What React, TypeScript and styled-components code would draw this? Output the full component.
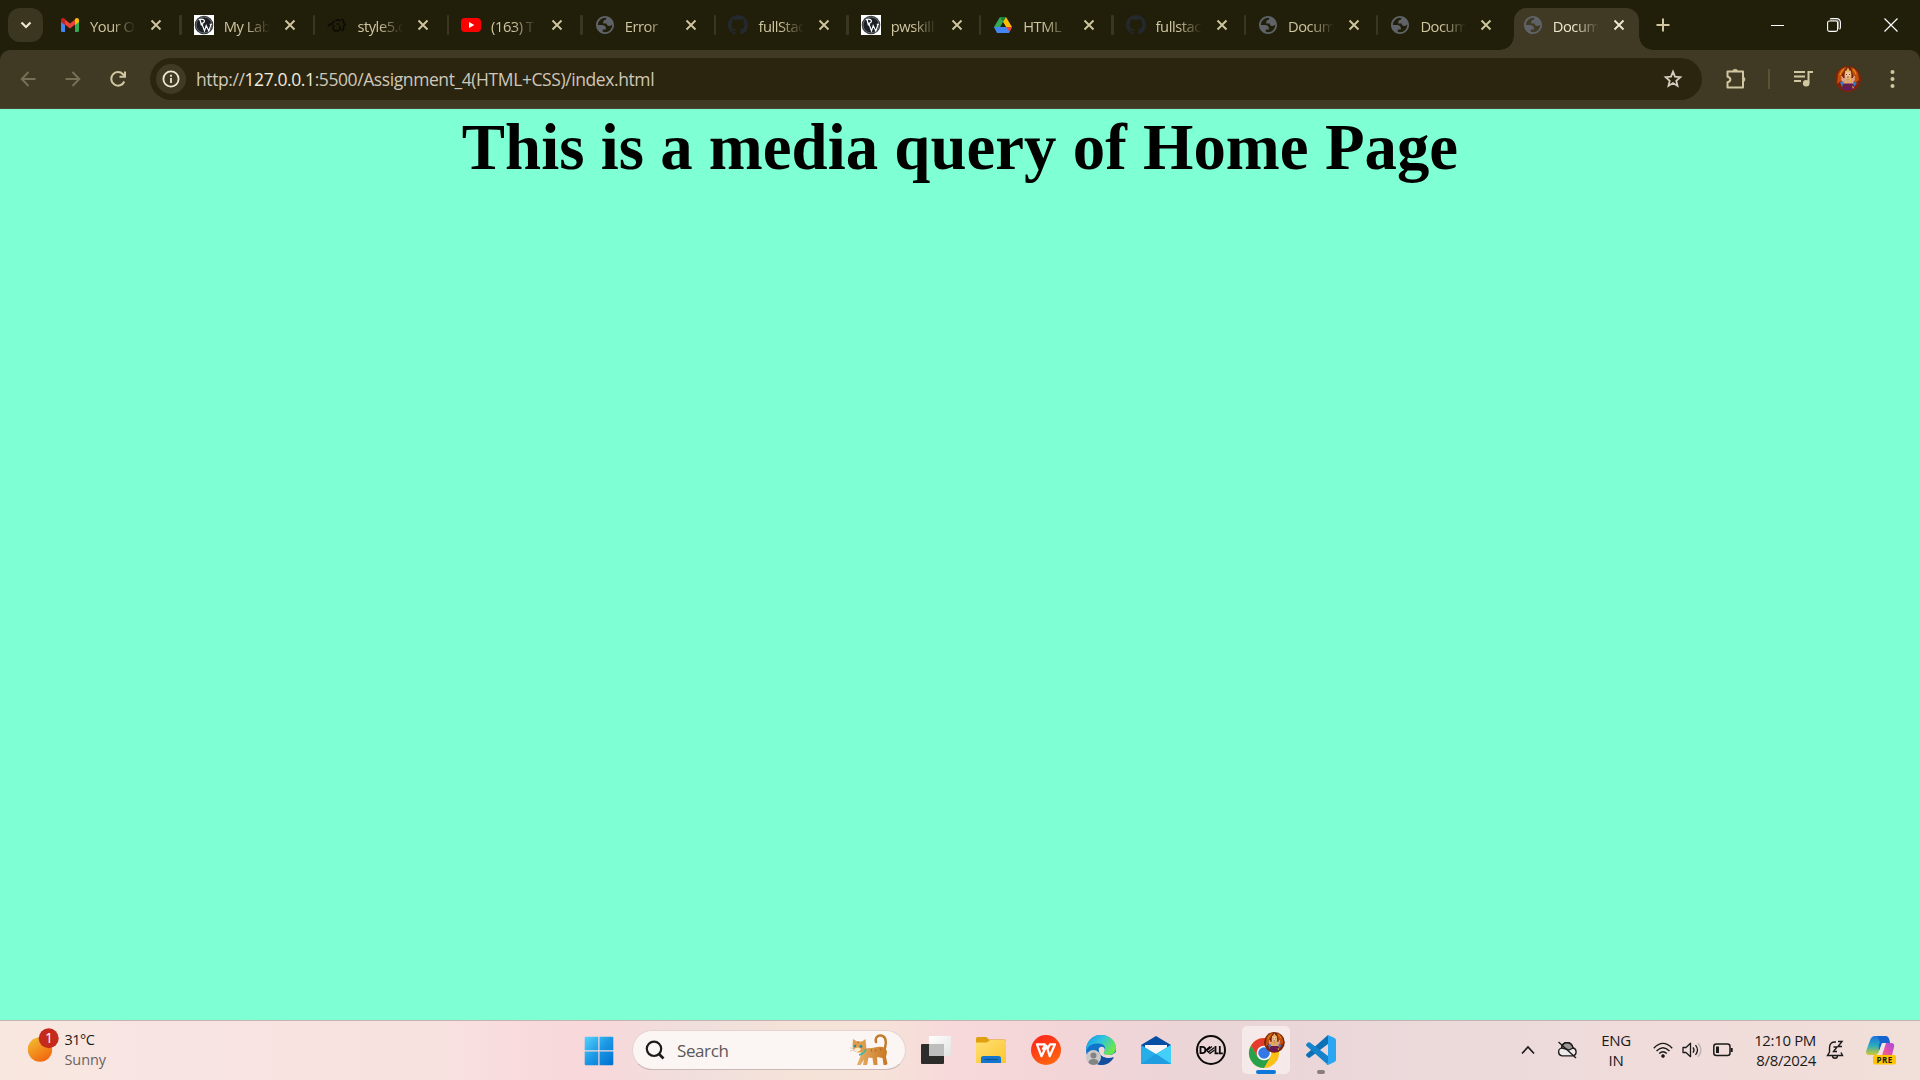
import React from "react";
import styled, { createGlobalStyle, css } from "styled-components";

const GlobalStyle = createGlobalStyle`
  * { box-sizing: border-box; }
  html, body { margin: 0; padding: 0; }
  body { width: 1920px; height: 1080px; overflow: hidden; background: #7fffd4; }
`;

const ui = css`
  font-family: "Open Sans", "Noto Sans", sans-serif;
`;

const Screen = styled.div`
  width: 1920px;
  height: 1080px;
  display: flex;
  flex-direction: column;
  ${ui}
`;

/* ---------- tab strip ---------- */
const TabStrip = styled.header`
  height: 50px;
  flex: none;
  display: flex;
  align-items: center;
  padding-left: 8px;
  background: #211f0a;
`;

const TabSearch = styled.button`
  width: 35px;
  height: 34px;
  margin-right: 5px;
  padding: 0;
  border: 0;
  border-radius: 12px;
  background: #3b3620;
  display: grid;
  place-items: center;
`;

const TabItem = styled.div<{ $width: number; $active?: boolean }>`
  position: relative;
  width: ${(p) => p.$width}px;
  height: 50px;
  flex: none;
  display: flex;
  align-items: center;
  padding-left: 12px;
  color: ${(p) => (p.$active ? "#efe6cf" : "#cfc6a0")};
`;

const ActiveShape = styled.div`
  position: absolute;
  left: 3px;
  top: 8px;
  width: 125px;
  height: 42px;
  border-radius: 13px 13px 0 0;
  background: #403a24;
  &::before,
  &::after {
    content: "";
    position: absolute;
    bottom: 0;
    width: 14px;
    height: 14px;
  }
  &::before {
    left: -14px;
    background: radial-gradient(circle at 0 0, transparent 13.5px, #403a24 14px);
  }
  &::after {
    right: -14px;
    background: radial-gradient(circle at 100% 0, transparent 13.5px, #403a24 14px);
  }
`;

const Favicon = styled.span`
  position: relative;
  width: 20px;
  height: 20px;
  flex: none;
  svg { display: block; }
`;

const TabTitle = styled.span`
  position: relative;
  width: 46px;
  margin-left: 10px;
  padding-top: 1px;
  overflow: hidden;
  white-space: nowrap;
  font-size: 14.7px;
  line-height: 22px;
  letter-spacing: -0.45px;
  mask-image: linear-gradient(90deg, #000 22px, transparent 46px);
`;

const TabClose = styled.span`
  position: relative;
  width: 12px;
  height: 12px;
  margin-left: 14px;
  svg { display: block; }
`;

const Divider = styled.span`
  width: 2.5px;
  height: 20px;
  margin-left: auto;
  border-radius: 1px;
  background: #3b3620;
`;

const NewTab = styled.div`
  width: 20px;
  margin-left: 10px;
  display: grid;
  place-items: center;
`;

const WindowControls = styled.div`
  margin-left: auto;
  display: flex;
  align-items: center;
  height: 48px;
`;

const WindowButton = styled.span<{ $width: number }>`
  width: ${(p) => p.$width}px;
  display: grid;
  place-items: center;
`;

/* ---------- toolbar ---------- */
const ToolbarBack = styled.div`
  height: 59px;
  flex: none;
  background: #211f0a;
`;

const Toolbar = styled.nav`
  height: 59px;
  display: flex;
  align-items: center;
  padding: 0 0 1px 5px;
  border-radius: 10px 10px 0 0;
  background: #403a24;
  border-bottom: 1px solid #4a4534;
`;

const NavButton = styled.span`
  width: 45px;
  display: grid;
  place-items: center;
`;

const Omnibox = styled.div`
  width: 1552px;
  height: 42px;
  margin-left: 10px;
  padding: 0 19px 0 6px;
  display: flex;
  align-items: center;
  border-radius: 21px;
  background: #2b250f;
`;

const SiteInfo = styled.span`
  width: 30px;
  height: 30px;
  border-radius: 50%;
  background: #403a24;
  display: grid;
  place-items: center;
`;

const Url = styled.span`
  margin-left: 10px;
  padding-top: 1px;
  flex: 1;
  font-size: 17.5px;
  line-height: 24px;
  letter-spacing: -0.41px;
  color: #cfc8ba;
  b { font-weight: 400; color: #f0eadb; }
`;

const ToolbarItem = styled.span<{ $gap: number }>`
  margin-left: ${(p) => p.$gap}px;
  display: grid;
  place-items: center;
`;

const ToolbarRule = styled.span`
  width: 2px;
  height: 20px;
  margin-left: 20px;
  background: #5c5430;
`;

/* ---------- page ---------- */
const Page = styled.main`
  flex: 1;
  background: #7fffd4;
`;

const Heading = styled.h1`
  margin: 0;
  padding-top: 1px;
  text-align: center;
  font-family: "Liberation Serif", "Times New Roman", serif;
  font-size: 64.8px;
  line-height: 74px;
  font-weight: 700;
  letter-spacing: 0.03px;
  color: #000;
`;

/* ---------- taskbar ---------- */
const Taskbar = styled.footer`
  height: 60px;
  flex: none;
  display: flex;
  align-items: center;
  border-top: 1px solid #c3b3b1;
  background: linear-gradient(
    90deg,
    #f8e7de 0, #f8e5e3 140px, #f8e3e1 300px, #f8e2e0 440px, #f9dadc 530px, #f8d8da 590px,
    #f0dedd 690px, #f5e3d8 800px, #f6e2d8 880px, #f7d9db 950px, #f4d5d8 1040px,
    #ead5d7 1220px, #ecdadb 1500px, #f0dcda 1680px, #f1dfd9 1920px
  );
`;

const Weather = styled.div`
  width: 580px;
  padding-left: 27px;
  display: flex;
  align-items: center;
`;

const WeatherText = styled.div`
  margin: -1px 0 0 5.5px;
  font-size: 14.5px;
  line-height: 20px;
  letter-spacing: -0.5px;
  color: #1b1a1a;
  span { display: block; }
  span + span { color: #6b6462; letter-spacing: -0.1px; }
`;

const SearchBox = styled.div`
  width: 274px;
  height: 40px;
  margin: -2px 0 0 12px;
  padding: 0 17px 0 12px;
  display: flex;
  align-items: center;
  border: 1px solid #e6d3d0;
  border-bottom-color: #c9b8b5;
  border-radius: 20px;
  background: #fbf5f3;
  font-size: 17px;
  letter-spacing: -0.4px;
  color: #5c5857;
  span { flex: 1; margin-left: 12px; padding-top: 1px; }
`;

const Apps = styled.div`
  display: flex;
  margin-left: 2px;
`;

const StartSlot = styled.span`
  width: 38px;
  margin-right: 2px;
  display: grid;
  place-items: center;
  svg { display: block; }
`;

const AppSlot = styled.span<{ $active?: boolean }>`
  position: relative;
  width: 55px;
  height: 60px;
  display: grid;
  place-items: center;
  svg { position: relative; display: block; margin-top: -2px; }
  ${(p) =>
    p.$active &&
    css`
      &::before {
        content: "";
        position: absolute;
        left: 4px;
        top: 5px;
        width: 48px;
        height: 48px;
        border-radius: 5px;
        background: #f5e9ea;
      }
    `}
`;

const Indicator = styled.i<{ $width: number; $color: string }>`
  position: absolute;
  left: ${(p) => 28 - p.$width / 2}px;
  top: 49px;
  width: ${(p) => p.$width}px;
  height: 4px;
  border-radius: 2px;
  background: ${(p) => p.$color};
`;

const Tray = styled.div`
  margin-left: auto;
  padding-right: 24px;
  display: flex;
  align-items: center;
  color: #1b1a1a;
`;

const TrayIcon = styled.span<{ $gap?: number }>`
  margin-left: ${(p) => p.$gap ?? 0}px;
  svg { display: block; margin-top: -2px; }
`;

const TrayText = styled.div<{ $width: number; $gap: number; $align: string }>`
  width: ${(p) => p.$width}px;
  margin: -2px 0 0 ${(p) => p.$gap}px;
  font-size: 15px;
  line-height: 20px;
  letter-spacing: -0.35px;
  white-space: nowrap;
  text-align: ${(p) => p.$align};
`;

/* ---------- favicons ---------- */
const Gmail = () => (
  <svg width="20" height="20" viewBox="0 0 20 20">
    <path d="M1 5v10.500Q1 17 2.500 17H5V8z" fill="#4285f4" />
    <path d="M15 8v9h2.500q1.500 0 1.500-1.500V5z" fill="#34a853" />
    <path d="M5 9.500V4.500l5 4 5-4v5l-5 4z" fill="#ea4335" />
    <path d="M1 5.500C1 3 3.500 2.400 5 4v6L1 7z" fill="#c5221f" />
    <path d="M19 5.500C19 3 16.500 2.400 15 4v6l4-3z" fill="#fbbc04" />
  </svg>
);

const PwLogo = () => (
  <svg width="20" height="20" viewBox="0 0 20 20">
    <path fill="#fff" d="M0 0h20v20H0z" />
    <circle cx="10" cy="10" r="9.300" fill="#33373b" />
    <circle cx="10" cy="10" r="7.900" fill="#1b2026" stroke="#8c8f92" strokeWidth=".6" />
    <path d="M7.500 10.500 6 4.500M4.800 4.800c4-1.600 6.600.3 5.300 2.400-.7 1-2 1.300-3.200 1.200" fill="none" stroke="#fff" strokeWidth="1.200" />
    <path d="m8 9 2.500 7 1.700-5.500 2.600 5.500L17 9.500M7 9h2.200M15.700 9.300H18" fill="none" stroke="#fff" strokeWidth="1.100" />
  </svg>
);

const StyleMark = () => (
  <svg width="20" height="20" viewBox="0 0 20 20" fill="none" stroke="#0c0b04" strokeWidth="1.600">
    <path d="M1 11.500C2 9 4 8.500 5 10.500M4 9.500C5 8 6.500 6.500 8 6.500M7.500 10c-2.500 2-1.500 6 2 6s4.500-2.500 3-5.500M9.500 9H12M8.500 5.500q3-1.500 5 .5M14.500 4.500c3.500-.5.800 4 3.500 5-2.700 1 0 6-3.500 6" />
  </svg>
);

const YouTube = () => (
  <svg width="20" height="20" viewBox="0 0 20 20">
    <rect y="3" width="20" height="14" rx="4" fill="#f00" />
    <path d="m8 7 5.300 3L8 13z" fill="#fff" />
  </svg>
);

const Globe = () => (
  <svg width="20" height="20" viewBox="0.9 0.9 22.2 22.2">
    <path
      fill="#5f6368"
      fillRule="evenodd"
      d="M12 2C6.480 2 2 6.480 2 12s4.480 10 10 10 10-4.480 10-10S17.520 2 12 2zM4 12h4.400c3.407.022 4.922 1.730 4.543 5.127H9.488v2.470a8.004 8.004 0 0 0 10.498-8.083C19.327 12.504 18.332 13 17 13c-2.137 0-3.206-.916-3.206-2.750h-3.748c-.274-2.728.683-4.092 2.870-4.092 0-.975.327-1.597.811-1.970A8.004 8.004 0 0 0 4 12z"
    />
  </svg>
);

const GitHub = () => (
  <svg width="20" height="20" viewBox="0 0 16 16">
    <path
      fill="#24292e"
      d="M8 0C3.580 0 0 3.580 0 8c0 3.540 2.290 6.530 5.470 7.590.4.070.55-.17.55-.38 0-.19-.01-.82-.01-1.490-2.010.37-2.530-.49-2.690-.94-.09-.23-.48-.94-.82-1.130-.28-.15-.68-.52-.01-.53.63-.01 1.080.58 1.230.82.72 1.210 1.870.87 2.330.66.070-.52.280-.87.510-1.070-1.780-.2-3.640-.89-3.640-3.950 0-.87.310-1.590.82-2.150-.08-.2-.36-1.020.08-2.120 0 0 .67-.21 2.200.82.640-.18 1.320-.27 2-.27s1.360.09 2 .27c1.530-1.040 2.200-.82 2.200-.82.440 1.100.16 1.920.08 2.120.51.560.82 1.270.82 2.150 0 3.070-1.870 3.750-3.650 3.950.29.250.54.73.54 1.480 0 1.070-.01 1.930-.01 2.200 0 .21.150.46.55.38A8.010 8.010 0 0 0 16 8c0-4.420-3.580-8-8-8z"
    />
  </svg>
);

const Drive = () => (
  <svg width="20" height="20" viewBox="0 0 20 20">
    <path d="M7 2h3l2 3.500L5 18 1 12z" fill="#34a853" />
    <path d="M7 2h6l-3 5z" fill="#188038" />
    <path d="m10 7 3-5 6 10h-6z" fill="#fbbc04" />
    <path d="M1 12h18l-3 6H4z" fill="#4285f4" />
    <path d="M13 12h6l-2.500 5z" fill="#ea4335" />
    <path d="m7.200 12 2.800-5 2.900 5z" fill="#211f0a" />
  </svg>
);

const Avatar = () => (
  <g>
    <circle cx="13" cy="13" r="13" fill="#7d2408" />
    <path d="M3 8q3-7 9-7-6 6-6 14L2 18zM16 1q8 3 8 13l-4 3z" fill="#c0500c" />
    <path d="M5 9q1-4 4-6M21 8q-1-3-3-5" stroke="#e88a1c" strokeWidth="1.200" fill="none" />
    <path d="M9.500 10l.5-5 1.500-.5L13 1.500l1.500 3 1.500.5.500 5-1 3h-5z" fill="#e3b765" />
    <ellipse cx="13" cy="9" rx="2.600" ry="3" fill="#f0c4a4" />
    <path d="m6 13 4-1.500 3 2 3-2 4 1.500-1.500 5h-11z" fill="#dca184" />
    <path d="M6 10l2 1-1 3zM20 10l-2 1 1 3z" fill="#f0c4a4" />
    <path d="m10.500 13 1 5M15.500 13l-1 5" stroke="#e6b52c" strokeWidth="1.200" />
    <path d="m5 16 4-.5-2 6zM18 15.500l4 1.500-3 4z" fill="#3a78c4" />
    <path d="M8.500 17.500h9l1.500 5.500q-6 3-12 0z" fill="#641a5c" />
    <path d="M11 8.500h1M14 8.500h1M12 11h2M9 19.500l4 1 4-1" stroke="#6f2416" strokeWidth=".8" fill="none" />
    <path d="M17 20l2 1-1 2z" fill="#e8b93a" />
  </g>
);

/* ---------- tabs ---------- */
const tabs = [
  { icon: <Gmail />, title: "Your O" },
  { icon: <PwLogo />, title: "My Lab" },
  { icon: <StyleMark />, title: "style5.c" },
  { icon: <YouTube />, title: "(163) T" },
  { icon: <Globe />, title: "Error" },
  { icon: <GitHub />, title: "fullStac" },
  { icon: <PwLogo />, title: "pwskill" },
  { icon: <Drive />, title: "HTML" },
  { icon: <GitHub />, title: "fullstac" },
  { icon: <Globe />, title: "Docum" },
  { icon: <Globe />, title: "Docum" },
  { icon: <Globe />, title: "Docum" },
];

const TabBar = () => (
  <TabStrip>
    <TabSearch>
      <svg width="12" height="8" viewBox="0 0 12 8" fill="none" stroke="#efe6cf" strokeWidth="2.200">
        <path d="m1.500 1.500 4.500 4.500 4.500-4.500" />
      </svg>
    </TabSearch>
    {tabs.map((tab, i) => {
      const active = i === tabs.length - 1;
      return (
        <TabItem key={i} $width={i < 5 ? 133.7 : 132.4} $active={active}>
          {active && <ActiveShape />}
          <Favicon>{tab.icon}</Favicon>
          <TabTitle>{tab.title}</TabTitle>
          <TabClose>
            <svg width="12" height="12" viewBox="0 0 12 12" stroke="currentColor" strokeWidth="1.900">
              <path d="m1.500 1.500 9 9m0-9-9 9" />
            </svg>
          </TabClose>
          {i < 10 && <Divider />}
        </TabItem>
      );
    })}
    <NewTab>
      <svg width="14" height="14" viewBox="0 0 14 14" stroke="#cfc6a0" strokeWidth="2">
        <path d="M7 .5v13M.5 7h13" />
      </svg>
    </NewTab>
    <WindowControls>
      <WindowButton $width={56}>
        <svg width="13" height="13" viewBox="0 0 13 13"><path d="M0 6.500h13" stroke="#fff" /></svg>
      </WindowButton>
      <WindowButton $width={57}>
        <svg width="14" height="14" viewBox="0 0 14 14" fill="none" stroke="#fff" strokeWidth="1.100">
          <path d="M3 1Q3.500.6 5 .6h4.500q3.900 0 3.900 3.900V9q0 1.600-.8 2.300" />
          <path d="M3 2.200h6.500q2 0 2 2V11" stroke="#8f8e83" />
          <rect x=".6" y="3" width="10" height="10.400" rx="1.800" />
        </svg>
      </WindowButton>
      <WindowButton $width={58}>
        <svg width="14" height="14" viewBox="0 0 14 14" stroke="#fff" strokeWidth="1.200"><path d="m.5.5 13 13m0-13-13 13" /></svg>
      </WindowButton>
    </WindowControls>
  </TabStrip>
);

const AddressBar = () => (
  <ToolbarBack>
    <Toolbar>
      <NavButton>
        <svg width="16" height="16" viewBox="0 0 16 16" fill="none" stroke="#777057" strokeWidth="1.900">
          <path d="M15.500 8H2M8.500 1 1.700 8l6.800 7" />
        </svg>
      </NavButton>
      <NavButton>
        <svg width="16" height="16" viewBox="0 0 16 16" fill="none" stroke="#777057" strokeWidth="1.900">
          <path d="M.5 8H14M7.500 1l6.800 7-6.800 7" />
        </svg>
      </NavButton>
      <NavButton>
        <svg width="18" height="18" viewBox="0 0 18 18" fill="none" stroke="#d0c69f" strokeWidth="2">
          <path d="M15.300 11.500A6.800 6.800 0 1 1 14 4.200l2 2.300M16 1.500v5.300h-5.500" />
        </svg>
      </NavButton>
      <Omnibox>
        <SiteInfo>
          <svg width="18" height="18" viewBox="0 0 18 18" fill="none" stroke="#eee5d3" strokeWidth="1.800">
            <circle cx="9" cy="9" r="7.600" />
            <path d="M9 8v5M9 4.800v1.900" />
          </svg>
        </SiteInfo>
        <Url>
          http://<b>127.0.0.1</b>:5500/Assignment_4(HTML+CSS)/index.html
        </Url>
        <svg width="20" height="20" viewBox="0 0 20 20" fill="none" stroke="#d6cdc0" strokeWidth="1.800">
          <path d="m10 2.700 2 5 5.300.5-4 3.500 1.200 5.200L10 14.100l-4.500 2.800 1.200-5.200-4-3.500 5.300-.5z" />
        </svg>
      </Omnibox>
      <ToolbarItem $gap={22}>
        <svg width="24" height="24" viewBox="0 0 24 24" fill="none" stroke="#d0c69f" strokeWidth="2">
          <path d="M3.500 4.500H19V20.500H3.500V15.300q2.900-.8 2.900-2.800t-2.900-2.800z" stroke="none" />
          <path d="M3.500 4.500H19V20.500H3.500V15.300Q6.400 14.500 6.400 12.500Q6.400 10.500 3.500 9.700Z" strokeLinejoin="round" />
          <path d="M8.700 4.500a2.500 2.300 0 0 1 5 0zM19 10.100a2 2.300 0 0 1 0 4.600z" fill="#d0c69f" strokeWidth=".6" />
        </svg>
      </ToolbarItem>
      <ToolbarRule />
      <ToolbarItem $gap={23}>
        <svg width="21" height="18" viewBox="0 0 21 18" fill="none" stroke="#d0c69f" strokeWidth="2">
          <path d="M1 2h11M1 6.500h11M1 11h7M15.500 13V2H20" />
          <circle cx="13.200" cy="13.300" r="2.300" fill="#d0c69f" />
        </svg>
      </ToolbarItem>
      <ToolbarItem $gap={21}>
        <svg width="26" height="26" viewBox="0 0 26 26"><Avatar /></svg>
      </ToolbarItem>
      <ToolbarItem $gap={29}>
        <svg width="6" height="22" viewBox="0 0 6 22" fill="#d0c69f">
          <circle cx="2.500" cy="4" r="2" /><circle cx="2.500" cy="11" r="2" /><circle cx="2.500" cy="18" r="2" />
        </svg>
      </ToolbarItem>
    </Toolbar>
  </ToolbarBack>
);

/* ---------- taskbar icons ---------- */
const Sun = () => (
  <svg width="32" height="48" viewBox="0 0 32 48">
    <defs>
      <linearGradient id="sun" x1="0" y1="0" x2=".6" y2="1">
        <stop stopColor="#f2c335" /><stop offset="1" stopColor="#f2690d" />
      </linearGradient>
    </defs>
    <circle cx="13" cy="22.500" r="12.200" fill="url(#sun)" />
    <circle cx="21.700" cy="11.200" r="10" fill="#c42b1c" />
    <text x="22" y="16.300" textAnchor="middle" fontSize="14" fill="#fff" fontFamily="Open Sans, sans-serif">1</text>
  </svg>
);

const WindowsLogo = () => (
  <svg width="30" height="30" viewBox="0 0 30 30">
    <defs>
      <linearGradient id="win" x1="0" y1="0" x2="1" y2="1" gradientUnits="objectBoundingBox">
        <stop stopColor="#54d2fb" /><stop offset=".5" stopColor="#1b97e4" /><stop offset="1" stopColor="#0070d0" />
      </linearGradient>
    </defs>
    <path d="M1.500.7h12.800v13.600H.7V1.500zM15.500.7h13l.8.8v12.800H15.500zM.7 15.500h13.600v13.800H1.500l-.8-.8zM15.500 15.500h13.800v13l-.8.8h-13z" fill="url(#win)" />
  </svg>
);

const Cat = () => (
  <svg width="38" height="32" viewBox="0 0 38 32">
    <defs>
      <linearGradient id="cat" x1="0" x2="1"><stop stopColor="#e6b06a" /><stop offset="1" stopColor="#c9761f" /></linearGradient>
    </defs>
    <path d="M33 18c4-6 4-16-2-16.500-4-.3-6 2.500-5 6.500" fill="none" stroke="#c47a2c" strokeWidth="2.500" strokeLinecap="round" />
    <path d="M11 14q9 1 16-1 9-1.500 10 5l-1 5 1.500 7q-1 1.500-4 .8L32.500 24 27 23l.5 8h-4l-1-7-4-.5L17 31h-4l1-5.500L10.500 31H7l3.500-9z" fill="url(#cat)" />
    <path d="m3 5 4 2.500h5L15.500 5l.8 9q-3 5-8.300 4.500Q3 18 2.500 12z" fill="#dd9c4c" />
    <path d="M4 15q4-3 7 0-1.500 3.500-4.500 3-2.500-.5-2.500-3z" fill="#fbe9d0" />
    <path d="M0 14l3 .5M0 17l4-1" stroke="#d2b69a" strokeWidth=".6" />
    <circle cx="5" cy="12" r="1.200" fill="#258b9f" /><circle cx="11" cy="12.500" r="1.400" fill="#258b9f" />
    <path d="M9 21q5-1 7-6" stroke="#35b6ae" strokeWidth="1.500" fill="none" />
    <path d="m21 15 1 3M25 15l1 3M30 14l1 3M8 7v2" stroke="#ad6120" strokeWidth=".8" />
  </svg>
);

const TaskView = () => (
  <svg width="30" height="30" viewBox="0 0 30 30">
    <defs>
      <linearGradient id="tv" x1="0" y1="0" x2="1" y2="1"><stop stopColor="#fff" /><stop offset="1" stopColor="#e2e2e3" /></linearGradient>
    </defs>
    <rect y="9" width="23" height="20" rx="1" fill="#2c2c2b" />
    <rect x="8" y="1" width="22" height="20" rx="1" fill="url(#tv)" />
    <path d="M8 9h15v12H8z" fill="#bebebe" />
  </svg>
);

const Explorer = () => (
  <svg width="30" height="28" viewBox="0 0 30 28">
    <defs>
      <linearGradient id="fold" x1="0" y1="0" x2="1" y2="1"><stop stopColor="#ffdf74" /><stop offset="1" stopColor="#fcc62f" /></linearGradient>
    </defs>
    <path d="M0 2.500Q0 1 1.500 1h9L13 3.500h15.500Q30 3.500 30 5V8H0z" fill="#dfa010" />
    <path d="M0 6.500h11l3-2.500h14.500Q30 4 30 5.500V27H0z" fill="url(#fold)" />
    <path d="M5 27v-5.500Q5 20 7.500 20h15q2.500 0 2.500 2V27z" fill="#1377cd" />
    <path d="M8.500 23.500h13" stroke="#0b4f94" strokeWidth="1.200" />
  </svg>
);

const Wps = () => (
  <svg width="30" height="30" viewBox="0 0 30 30">
    <defs><linearGradient id="wps" x1="0" y1="0" x2=".5" y2="1"><stop stopColor="#fd1f1c" /><stop offset="1" stopColor="#ff6210" /></linearGradient></defs>
    <circle cx="15" cy="15" r="15" fill="url(#wps)" />
    <path d="M14.500 9.300H6l4.500 12 5-10.500 3.200 10.500L24 9.300h-5l-2 4M14.500 9.300l-3 5.500" fill="none" stroke="#fff" strokeWidth="2.200" strokeLinejoin="round" />
  </svg>
);

const Edge = () => (
  <svg width="30" height="30" viewBox="0 0 30 30">
    <defs>
      <linearGradient id="edge" x1="0" y1="0" x2="1" y2=".5"><stop stopColor="#1597e5" /><stop offset=".5" stopColor="#30c3df" /><stop offset="1" stopColor="#6be64d" /></linearGradient>
    </defs>
    <circle cx="15" cy="15" r="15" fill="#1173c9" />
    <path d="M.4 12C2 4 8 0 15 0c9 0 15 6 15 12.500 0 5-3.500 7.500-7.500 7.500-5 0-5.500-2-4-4 2-4-1-7.500-6-7.500C7 8.500 2 10 .4 16z" fill="url(#edge)" />
    <path d="M12.500 14c2-4 7.500-2 6 2-1.500 2.500-1 4 4 4 3 0 5.500-1 8.500-4v6l-2.500.5q-7 2-11-.5-5-3-5-8z" fill="#f1d9da" />
    <path d="M12 13q0 9 9 10 4 .2 6.800-1Q23 31 13 30 7 23 12 13z" fill="#124f9f" />
    <circle cx="7.500" cy="22.500" r="7.500" fill="#cac9ca" />
    <circle cx="7.500" cy="20.500" r="3" fill="#858484" />
    <path d="M2.500 28q0-4 5-4t5 4q-5 4-10 0z" fill="#858484" />
  </svg>
);

const Mail = () => (
  <svg width="30" height="28" viewBox="0 0 30 28">
    <path d="M0 9 15 0l15 9v4H0z" fill="#064ea3" />
    <path d="M4 9h22v9H4z" fill="#fcf5f5" />
    <path d="m0 9 15 9L30 9v19H0z" fill="#27aee9" />
    <path d="M15 18 30 9v19z" fill="#42d0f8" />
    <path d="M0 28 15 18l15 10z" fill="#209ce1" />
  </svg>
);

const Dell = () => (
  <svg width="30" height="30" viewBox="0 0 30 30">
    <circle cx="15" cy="15" r="14" fill="none" stroke="#0c0b0b" strokeWidth="2" />
    <path d="M4.500 11.800h1.700a3.200 3.200 0 0 1 0 6.400H4.500zM19.500 11v7.300h3M23.800 11v7.300h3" fill="none" stroke="#0c0b0b" strokeWidth="1.800" />
    <path d="m14 11.500-4 3.500 4 3.500 4.500-3.500M11 15.500l5-4M12.500 17l6-4.500" fill="none" stroke="#0c0b0b" strokeWidth="1.300" />
  </svg>
);

const Chrome = () => (
  <svg width="38" height="38" viewBox="0 0 38 38">
    <circle cx="17" cy="22" r="15" fill="#fbc116" />
    <path d="M4 14.500A15 15 0 0 1 30 14.500H17L10.500 25.700z" fill="#e33b2e" />
    <path d="M4 14.500 10.500 25.700 17 29.500l6.500-3.800L17 37A15 15 0 0 1 4 14.500z" fill="#29a04a" />
    <circle cx="17" cy="22" r="7.300" fill="#fff" />
    <circle cx="17" cy="22" r="5.800" fill="#3478e5" />
    <g transform="translate(17 1) scale(.8)"><Avatar /></g>
  </svg>
);

const VsCode = () => (
  <svg width="30" height="30" viewBox="0 0 30 30">
    <path d="M22 0v9L4 22.500q-1 .7-2 0L.5 21q-1-1 0-2z" fill="#0b70b6" />
    <path d="M22 30v-9L4 7.500q-1-.7-2 0L.5 9q-1 1 0 2z" fill="#1583cc" />
    <path d="M22 0l6.500 3Q30 3.800 30 5v20q0 1.200-1.500 2L22 30q-1.500 0-1.500-.8l1.500-1.700z" fill="#2aa6f2" />
  </svg>
);

const Copilot = () => (
  <svg width="30" height="30" viewBox="0 0 30 30">
    <defs>
      <linearGradient id="cpa" x1="0" y1="0" x2="0" y2="1"><stop stopColor="#1e72e0" /><stop offset=".5" stopColor="#28aabf" /><stop offset="1" stopColor="#d5ca2b" /></linearGradient>
      <linearGradient id="cpb" x1="1" y1="0" x2="0" y2="1"><stop stopColor="#a04be8" /><stop offset=".5" stopColor="#e652a5" /><stop offset="1" stopColor="#ff7c55" /></linearGradient>
    </defs>
    <path d="M9 1h10q3 0 4 3l1 4-8-1-3 9q-1 4-4 4H3q-4 0-2.500-5l4-11Q6 1 9 1z" fill="url(#cpa)" />
    <path d="M19 8h6q4 0 3 4l-2 8q-1 4-5 4h-8q2 0 3-4z" fill="url(#cpb)" />
    <path d="M11 1h8q3 0 4 3l1 4h-5q-3 0-4 3l-2 5q-1-6 1-9z" fill="#1864cf" />
    <path d="m16 8h4l-4 12h-4z" fill="#f3e4e6" />
    <rect x="7" y="20" width="23" height="9.500" rx="2" fill="#ffc600" />
    <text x="18.700" y="27.700" textAnchor="middle" fontSize="8" fontWeight="700" letterSpacing=".5" fontFamily="Open Sans, sans-serif" fill="#1c1b18">PRE</text>
  </svg>
);

const SystemTray = () => (
  <Tray>
    <TrayIcon>
      <svg width="14" height="10" viewBox="0 0 14 10" fill="none" stroke="#1b1a1a" strokeWidth="1.700"><path d="m1 8.500 6-6.500 6 6.500" /></svg>
    </TrayIcon>
    <TrayIcon $gap={22}>
      <svg width="21" height="18" viewBox="0 0 21 18" fill="none" stroke="#1b1a1a" strokeWidth="1.300">
        <path d="M5 14.800A4 4 0 0 1 4.500 7C5.500 0 14.500 0 16 7a4 4 0 0 1 0 7.800z" fill="#efeaea" />
        <path d="M4.500 7C5.500 0 14.500 0 16 7l-4 2-3-1z" fill="#999695" />
        <path d="m1.500 1 17.500 16" />
      </svg>
    </TrayIcon>
    <TrayText $width={30} $gap={23} $align="center">ENG<br />IN</TrayText>
    <TrayIcon $gap={22}>
      <svg width="20" height="16" viewBox="0 0 20 16" fill="none" stroke="#1b1a1a" strokeWidth="1.400">
        <path d="M.8 6.200q9.200-9.600 18.400 0M3.500 9q6.500-6.500 13 0M6.200 11.500q3.800-3.700 7.600 0" />
        <circle cx="10" cy="14" r="1.500" fill="#1b1a1a" strokeWidth=".6" />
      </svg>
    </TrayIcon>
    <TrayIcon $gap={9}>
      <svg width="21" height="16" viewBox="0 0 21 16" fill="none" stroke="#1b1a1a" strokeWidth="1.300">
        <path d="M1 5.500h3L8.500 1.300v13.400L4 10.500H1z" strokeLinejoin="round" />
        <path d="M11 5.300q2 2.700 0 5.400M13.500 3.200q4 4.800 0 9.600" />
        <path d="M16 1.200q6 6.800 0 13.600" stroke="#bcb2af" />
      </svg>
    </TrayIcon>
    <TrayIcon $gap={10}>
      <svg width="20" height="14" viewBox="0 0 20 14" fill="none" stroke="#1b1a1a" strokeWidth="1.500">
        <rect x=".8" y="1" width="16.200" height="11.500" rx="2.500" />
        <path d="M3 3.500h3v6.500H3z" fill="#1b1a1a" stroke="none" />
        <path d="M18.700 5v4" strokeWidth="2" />
      </svg>
    </TrayIcon>
    <TrayText $width={64} $gap={19} $align="right">12:10 PM<br />8/8/2024</TrayText>
    <TrayIcon $gap={10}>
      <svg width="20" height="20" viewBox="0 0 20 20" fill="none" stroke="#1b1a1a" strokeWidth="1.400">
        <path d="M10 2Q3.500 1.500 3.500 8v4L1.500 15.500h15L15 12.500M6.500 15.500q0 2.800 2.500 2.800t2.500-2.800M7.500 7h3.500l-3.500 4.500H11M12 1.500h4L12 6.500h4" />
      </svg>
    </TrayIcon>
    <TrayIcon $gap={20}>
      <Copilot />
    </TrayIcon>
  </Tray>
);

export default function App() {
  return (
    <Screen>
      <GlobalStyle />
      <TabBar />
      <AddressBar />
      <Page>
        <Heading>This is a media query of Home Page</Heading>
      </Page>
      <Taskbar>
        <Weather>
          <Sun />
          <WeatherText><span>31°C</span><span>Sunny</span></WeatherText>
        </Weather>
        <StartSlot><WindowsLogo /></StartSlot>
        <SearchBox>
          <svg width="20" height="20" viewBox="0 0 20 20" fill="none" stroke="#1d1c1c" strokeWidth="2.200">
            <circle cx="9" cy="8.800" r="7.200" /><path d="m14 14 4.500 4.500" strokeWidth="2.600" />
          </svg>
          <span>Search</span>
          <Cat />
        </SearchBox>
        <Apps>
          <AppSlot><TaskView /></AppSlot>
          <AppSlot><Explorer /></AppSlot>
          <AppSlot><Wps /></AppSlot>
          <AppSlot><Edge /></AppSlot>
          <AppSlot><Mail /></AppSlot>
          <AppSlot><Dell /></AppSlot>
          <AppSlot $active><Chrome /><Indicator $width={20} $color="#0d78d8" /></AppSlot>
          <AppSlot><VsCode /><Indicator $width={8} $color="#8b7c7d" /></AppSlot>
        </Apps>
        <SystemTray />
      </Taskbar>
    </Screen>
  );
}
